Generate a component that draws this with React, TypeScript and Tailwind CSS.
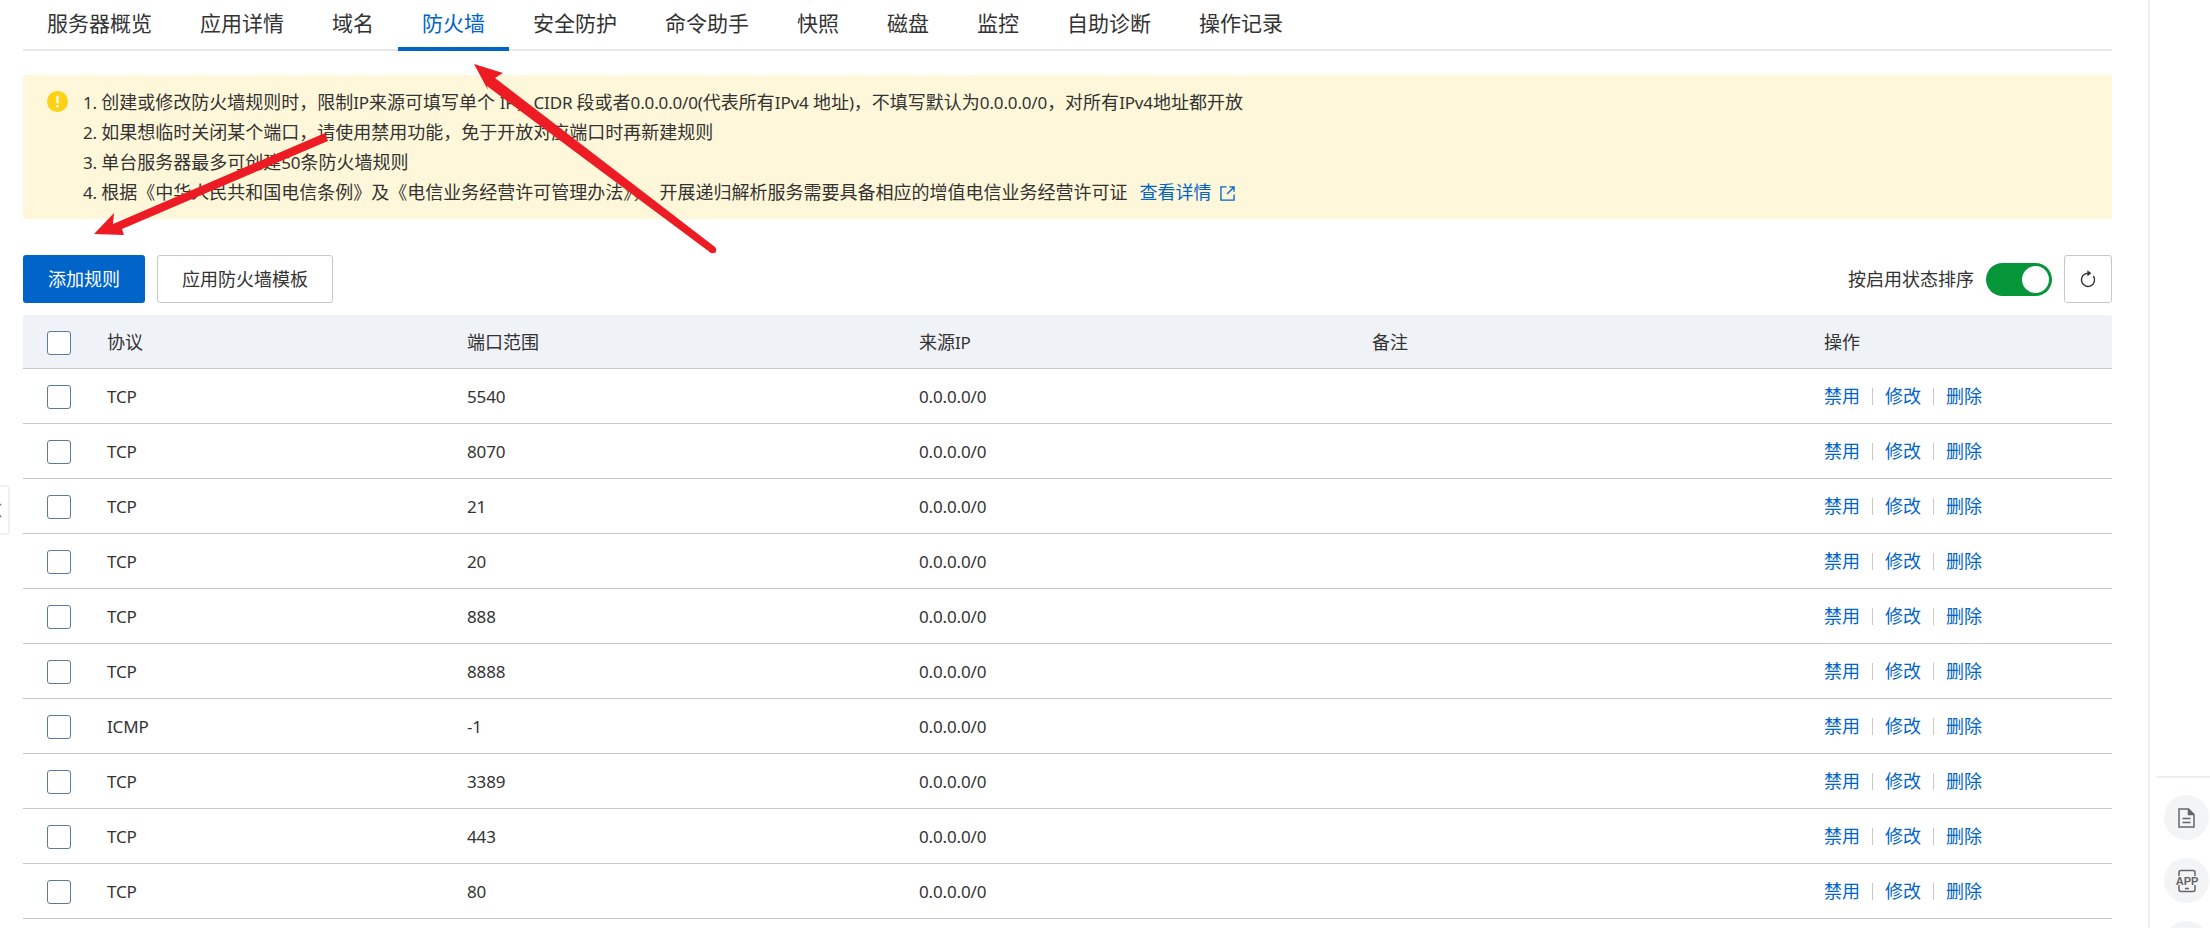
const tabs = ["服务器概览", "应用详情", "域名", "防火墙", "安全防护", "命令助手", "快照", "磁盘", "监控", "自助诊断", "操作记录"];

const rules = [
  ["TCP", "5540"],
  ["TCP", "8070"],
  ["TCP", "21"],
  ["TCP", "20"],
  ["TCP", "888"],
  ["TCP", "8888"],
  ["ICMP", "-1"],
  ["TCP", "3389"],
  ["TCP", "443"],
  ["TCP", "80"],
];

const cols = "grid grid-cols-[84px_360px_452px_453px_452px_1fr] items-center";

// latin runs sit a little narrower than the CJK around them
function L({ children }: { children: React.ReactNode }) {
  return <span className="text-[17px] leading-none tracking-[-0.15px]">{children}</span>;
}

function Checkbox() {
  return <span className="block w-6 h-6 ml-6 mt-[2px] rounded-[3px] border-[1.5px] border-[#5b7a9e] bg-white" />;
}

function RowActions() {
  return (
    <div className="flex items-center text-[#0064c8]">
      <a>禁用</a>
      <span className="w-px h-[17px] bg-[#c8c8c8] mx-3" />
      <a>修改</a>
      <span className="w-px h-[17px] bg-[#c8c8c8] mx-3" />
      <a>删除</a>
    </div>
  );
}

function ExternalLink() {
  return (
    <svg width="15" height="15" viewBox="0 0 16 16" fill="none" stroke="#0064c8" strokeWidth="1.4" className="inline ml-[8px] align-[-2px]">
      <path d="M7 1H1v14h14V9" />
      <path d="M10 1h5v5M15 1L7.5 8.5" />
    </svg>
  );
}

export default function App() {
  return (
    <div className="relative flex h-[928px] w-[2210px] overflow-hidden bg-white text-[18px] leading-[30px] text-[#333] font-['Noto_Sans','Noto_Sans_CJK_SC',sans-serif]">
      <main className="w-[2148px] pl-[23px] pr-9">
        <nav className="flex h-[51px] border-b-2 border-[#e8e8e8] text-[21px] leading-[46px]">
          {tabs.map((t) => (
            <div
              key={t}
              className={
                t === "防火墙"
                  ? "h-[51px] px-6 border-b-4 border-[#0064c8] text-[#0064c8]"
                  : "h-[51px] px-6"
              }
            >
              {t}
            </div>
          ))}
        </nav>

        <section className="mt-6 h-[144px] flex gap-[15px] pl-6 pt-3 rounded-[3px] bg-[#fff7d9]">
          <svg width="21" height="21" viewBox="0 0 21 21" className="mt-1 shrink-0">
            <circle cx="10.5" cy="10.5" r="10.5" fill="#fcd116" />
            <rect x="9.4" y="4.5" width="2.2" height="8" rx="1" fill="#fff" />
            <circle cx="10.5" cy="15.3" r="1.3" fill="#fff" />
          </svg>
          <div>
            <p>
              <L>1. </L>创建或修改防火墙规则时，限制<L>IP</L>来源可填写单个 <L>IP</L>，<L>CIDR </L>段或者<L>0.0.0.0/0(</L>代表所有<L>IPv4 </L>地址<L>)</L>，不填写默认为<L>0.0.0.0/0</L>，对所有<L>IPv4</L>地址都开放
            </p>
            <p>
              <L>2. </L>如果想临时关闭某个端口，请使用禁用功能，免于开放对应端口时再新建规则
            </p>
            <p>
              <L>3. </L>单台服务器最多可创建<L>50</L>条防火墙规则
            </p>
            <p className="whitespace-pre">
              <L>4. </L>根据《中华人民共和国电信条例》及《电信业务经营许可管理办法》，  开展递归解析服务需要具备相应的增值电信业务经营许可证
              <a className="ml-3 text-[#0064c8]">查看详情</a>
              <ExternalLink />
            </p>
          </div>
        </section>

        <div className="mt-9 flex items-center">
          <button className="w-[122px] h-12 rounded-[3px] bg-[#0064c8] text-white">添加规则</button>
          <button className="ml-3 w-[176px] h-12 rounded-[3px] border border-[#c8c8c8] bg-white">应用防火墙模板</button>
          <span className="ml-auto">按启用状态排序</span>
          <span className="ml-3 flex items-center justify-end w-[66px] h-[33px] pr-[3px] rounded-full bg-[#05963a]">
            <span className="w-[27px] h-[27px] rounded-full bg-white" />
          </span>
          <button className="ml-3 flex items-center justify-center w-12 h-12 rounded-[3px] border border-[#c8c8c8]">
            <svg width="16" height="18" viewBox="0 0 16 18" fill="none" stroke="#333" strokeWidth="1.4">
              <path d="M8 3.2A6.6 6.6 0 1 0 13.4 6" />
              <path d="M7.4 0.2l4 3-4 3z" fill="#333" stroke="none" />
            </svg>
          </button>
        </div>

        <div className={`${cols} mt-3 h-[54px] rounded-t-[3px] border-b border-[#c8c8c8] bg-[#eff2f7]`}>
          <Checkbox />
          <span>协议</span>
          <span>端口范围</span>
          <span>
            来源<L>IP</L>
          </span>
          <span>备注</span>
          <span>操作</span>
        </div>
        {rules.map(([protocol, port], i) => (
          <div key={i} className={`${cols} h-[55px] border-b border-[#c8c8c8]`}>
            <Checkbox />
            <L>{protocol}</L>
            <L>{port}</L>
            <L>0.0.0.0/0</L>
            <span />
            <RowActions />
          </div>
        ))}
      </main>

      <aside className="w-[62px] border-l-2 border-[#eee] pt-[776px]">
        <div className="ml-[6px] h-[2px] bg-[#eee]" />
        <div className="mt-[17px] ml-[14px] flex flex-col gap-[18px]">
          <span className="flex items-center justify-center w-[45px] h-[45px] shrink-0 rounded-full bg-[#f3f4f6]">
            <svg width="17" height="20" viewBox="0 0 17 20" fill="none" stroke="#666" strokeWidth="1.5">
              <path d="M1 1h9.5L16 6.5V19H1z" />
              <path d="M10.5 1v5.5H16" fill="#666" />
              <path d="M4.5 10.5h8M4.5 14.5h8" />
            </svg>
          </span>
          <span className="flex items-center justify-center w-[45px] h-[45px] shrink-0 rounded-full bg-[#f3f4f6]">
            <svg width="24" height="24" viewBox="0 0 24 24" fill="none">
              <rect x="4" y="1.5" width="16" height="21" rx="2" stroke="#666" strokeWidth="1.5" />
              <rect x="0" y="7" width="24" height="9" fill="#f3f4f6" />
              <text x="12" y="15.5" textAnchor="middle" fontSize="11" fontWeight="700" fill="#666" fontFamily="Liberation Sans, sans-serif">APP</text>
              <path d="M10 19.5h4" stroke="#666" strokeWidth="1.5" />
            </svg>
          </span>
          <span className="w-[45px] h-[45px] shrink-0 rounded-full bg-[#f3f4f6]" />
        </div>
      </aside>

      <div className="absolute left-0 top-[485px] w-[10px] h-[50px] rounded-r-[3px] border-2 border-l-0 border-[#f0f0f0] bg-white overflow-hidden">
        <svg width="8" height="46" viewBox="0 0 8 46" fill="none" stroke="#777" strokeWidth="1.5">
          <path d="M1 17L-5 23L1 30" />
        </svg>
      </div>

      <svg className="absolute left-0 top-0 pointer-events-none" width="800" height="320" viewBox="0 0 800 320">
        <polygon points="474,64 503,73 495,78 715,247 711,253 487,86 488,90" fill="#ed1c24" />
        <circle cx="713" cy="250" r="3.2" fill="#ed1c24" />
        <polygon points="94,234 114,213 113,224 325,133 328,141 122,229 124,235" fill="#ed1c24" />
      </svg>
    </div>
  );
}
